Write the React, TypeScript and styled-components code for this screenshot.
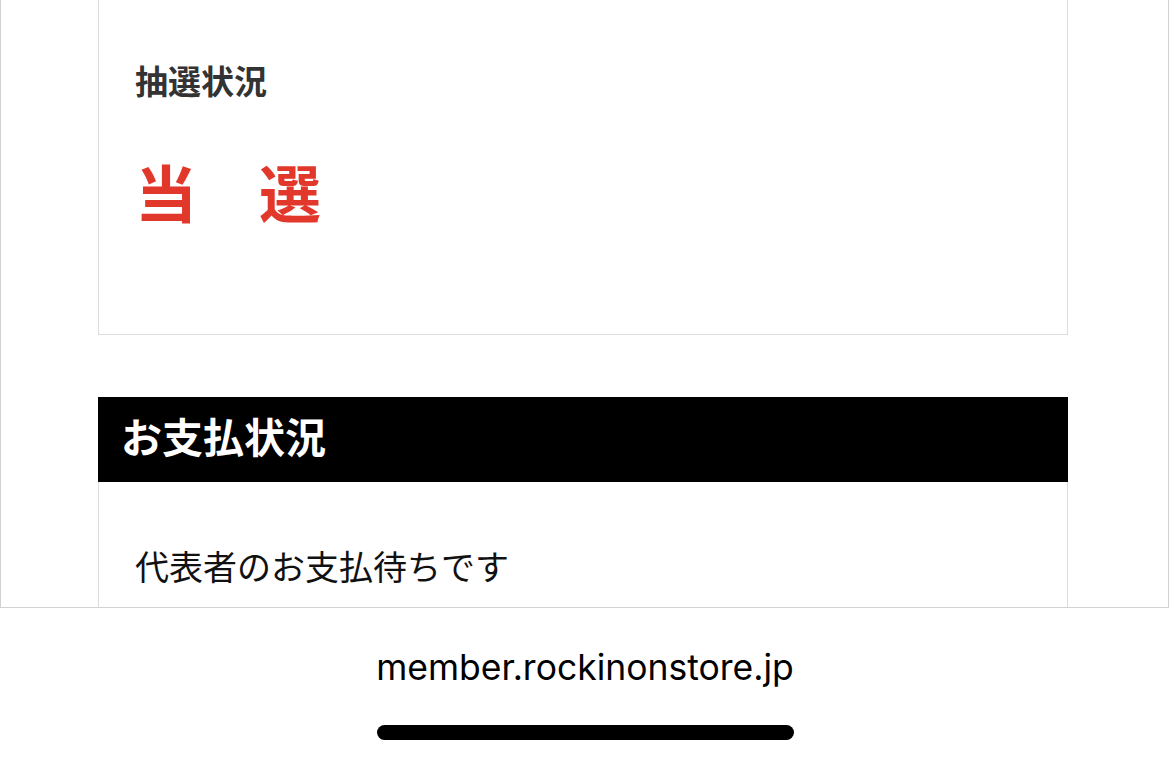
import React from 'react';
import styled, { createGlobalStyle } from 'styled-components';

const GlobalStyle = createGlobalStyle`
  html, body {
    margin: 0;
    padding: 0;
    background: #fff;
  }
  body {
    font-family: 'Noto Sans CJK JP', 'Noto Sans', sans-serif;
  }
`;

const Screen = styled.div`
  width: 1170px;
  height: 764px;
  display: flex;
  flex-direction: column;
  background: #fff;
  overflow: hidden;
`;

const Viewport = styled.div`
  width: 1169px;
  height: 608px;
  box-sizing: border-box;
  border: 1px solid #d2d2d2;
  border-top: none;
  overflow: hidden;
  flex-shrink: 0;
`;

const Content = styled.div`
  margin-top: -1px;
  padding: 0 100px 0 97px;
  display: flex;
  flex-direction: column;
`;

const Card = styled.section<{ $open?: boolean }>`
  border: 1px solid #dcdcdc;
  border-top: ${(p) => (p.$open ? 'none' : '1px solid #dcdcdc')};
  padding: ${(p) => (p.$open ? '67px 36px 40px' : '64px 36px 112px')};
  display: flex;
  flex-direction: column;
`;

const Label = styled.h3`
  margin: 0;
  font-size: 33px;
  line-height: 1;
  font-weight: 700;
  color: #333;
`;

const Result = styled.div`
  margin-top: 63px;
  font-size: 62px;
  line-height: 1;
  font-weight: 700;
  color: #e2382c;
`;

const SectionBar = styled.h2`
  margin: 62px 0 0;
  background: #000;
  color: #fff;
  font-size: 41px;
  line-height: 1;
  font-weight: 700;
  padding: 18px 23px 26px;
`;

const Message = styled.p`
  margin: 0;
  font-size: 34px;
  line-height: 1;
  font-weight: 400;
  color: #111;
`;

const Toolbar = styled.div`
  flex: 1;
  display: flex;
  flex-direction: column;
  align-items: center;
  background: #fff;
`;

const Address = styled.div`
  margin-top: 42px;
  font-family: Inter, Roboto, 'Noto Sans', sans-serif;
  font-size: 35.5px;
  line-height: 1;
  color: #000;
`;

const HomeIndicator = styled.div`
  margin-top: 39px;
  width: 417px;
  height: 15px;
  border-radius: 8px;
  background: #000;
`;

export default function App() {
  return (
    <>
      <GlobalStyle />
      <Screen>
        <Viewport>
          <Content>
            <Card>
              <Label>抽選状況</Label>
              <Result>当　選</Result>
            </Card>
            <SectionBar>お支払状況</SectionBar>
            <Card $open>
              <Message>代表者のお支払待ちです</Message>
            </Card>
          </Content>
        </Viewport>
        <Toolbar>
          <Address>member.rockinonstore.jp</Address>
          <HomeIndicator />
        </Toolbar>
      </Screen>
    </>
  );
}
